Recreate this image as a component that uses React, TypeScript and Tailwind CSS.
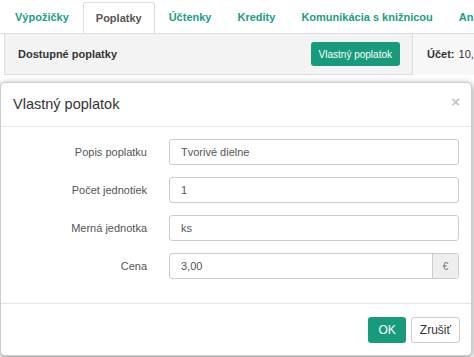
const tabs = [
  { label: "Výpožičky" },
  { label: "Poplatky", active: true },
  { label: "Účtenky" },
  { label: "Kredity" },
  { label: "Komunikácia s knižnicou" },
  { label: "Ankety" },
];

const fields = [
  { label: "Popis poplatku", value: "Tvorivé dielne" },
  { label: "Počet jednotiek", value: "1" },
  { label: "Merná jednotka", value: "ks" },
  { label: "Cena", value: "3,00", addon: "€" },
];

const App = () => {
  return (
    <div className="relative h-[357px] w-[474px] overflow-hidden bg-white font-['Liberation_Sans',Arial,sans-serif] text-[#333]">
      {/* tabs */}
      <div className="flex h-[34px] items-end overflow-hidden whitespace-nowrap border-b border-[#ddd] pl-[3px]">
        {tabs.map((t) =>
          t.active ? (
            <div
              key={t.label}
              className="-mb-px mr-[2px] flex h-[32px] shrink-0 items-center rounded-t-[3px] border border-b-white border-[#ddd] bg-white px-3 text-[11px] font-bold text-[#555]"
            >
              {t.label}
            </div>
          ) : (
            <div
              key={t.label}
              className="mr-[2px] flex h-[32px] shrink-0 items-center px-3 text-[11px] font-bold text-[#1a9e7f]"
            >
              {t.label}
            </div>
          )
        )}
      </div>

      {/* panel header */}
      <div className="flex h-[41px]">
        <div className="ml-[4px] flex w-[409px] shrink-0 items-center justify-between border border-t-0 border-[#ddd] bg-[#f3f3f3] pl-[13px] pr-[12px]">
          <span className="text-[11px] font-bold text-[#333]">Dostupné poplatky</span>
          <button className="h-[24px] rounded-[3px] bg-[#179b7c] px-[8px] text-[10px] text-white">
            Vlastný poplatok
          </button>
        </div>
        <div className="flex flex-1 items-center overflow-hidden whitespace-nowrap bg-[#f7f7f7] pl-[14px] text-[11px]">
          <span className="font-bold">Účet:</span>
          <span className="ml-1">10,00 €</span>
        </div>
      </div>

      {/* modal */}
      <div className="absolute left-0 top-[82px] w-[472px] rounded-[5px] border border-[rgba(0,0,0,0.2)] bg-white shadow-[0_2px_7px_rgba(0,0,0,0.45)]">
        <div className="flex h-[44px] items-center justify-between border-b border-[#e5e5e5] pl-[12px] pr-[11px]">
          <h4 className="text-[14.5px] text-[#333]">Vlastný poplatok</h4>
          <span className="-mt-[6px] text-[15px] font-bold leading-none text-[#c4c4c4]">×</span>
        </div>

        <div className="p-[12px]">
          {fields.map((f) => (
            <div key={f.label} className="mb-[12px] flex items-center">
              <label className="w-[134px] shrink-0 text-right text-[11px] text-[#555]">{f.label}</label>
              <div className="ml-[22px] flex h-[26px] flex-1 rounded-[3px] border border-[#ccc] text-[11px] text-[#555]">
                <div className="flex flex-1 items-center pl-[11px]">{f.value}</div>
                {f.addon && (
                  <div className="flex w-[26px] items-center justify-center rounded-r-[3px] border-l border-[#ccc] bg-[#eee] text-[10px] text-[#777]">
                    {f.addon}
                  </div>
                )}
              </div>
            </div>
          ))}
        </div>

        <div className="flex h-[52px] items-center justify-end gap-[5px] border-t border-[#e5e5e5] pr-[11px]">
          <button className="h-[26px] rounded-[3px] bg-[#179b7c] px-[10px] text-[12px] text-white">OK</button>
          <button className="h-[26px] rounded-[3px] border border-[#ccc] bg-white px-[8px] text-[12px] text-[#333]">
            Zrušiť
          </button>
        </div>
      </div>
    </div>
  );
};

export default App;
